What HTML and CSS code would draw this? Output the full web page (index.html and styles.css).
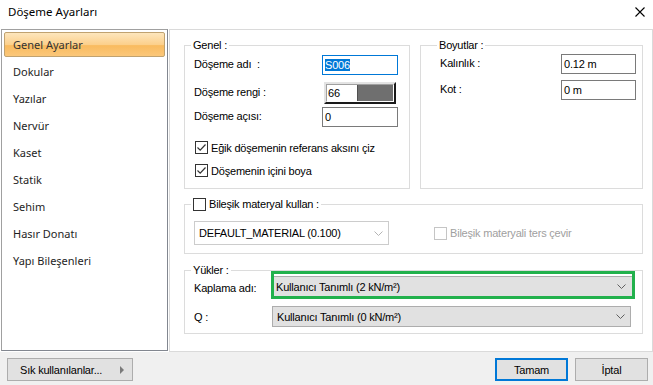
FILE: index.html
```html
<!DOCTYPE html>
<html lang="tr">
<head>
  <meta charset="UTF-8">
  <title>Döşeme Ayarları</title>
  <link rel="stylesheet" href="styles.css">
</head>
<body>
  <div class="window">
    <div class="titlebar">
      <span class="title">Döşeme Ayarları</span>
      <svg class="close" width="10" height="10" viewBox="0 0 10 10"><path d="M0.5 0.5 L9.5 9.5 M9.5 0.5 L0.5 9.5" stroke="#000" stroke-width="1.1" fill="none"/></svg>
    </div>
    <div class="content">
      <ul class="nav">
        <li class="active">Genel Ayarlar</li>
        <li>Dokular</li>
        <li>Yazılar</li>
        <li>Nervür</li>
        <li>Kaset</li>
        <li>Statik</li>
        <li>Sehim</li>
        <li>Hasır Donatı</li>
        <li>Yapı Bileşenleri</li>
      </ul>
      <div class="panel">
        <div class="top-row">
          <fieldset class="group genel">
            <legend>Genel :</legend>
            <div class="form-row r1">
              <label>Döşeme adı&nbsp; :</label>
              <div class="textbox focused"><span class="sel">S006</span></div>
            </div>
            <div class="form-row r2">
              <label>Döşeme rengi :</label>
              <div class="color-ctl">
                <div class="color-inner">
                  <span class="color-num">66</span>
                  <span class="swatch"></span>
                </div>
              </div>
            </div>
            <div class="form-row r3">
              <label>Döşeme açısı:</label>
              <div class="textbox">0</div>
            </div>
            <div class="check c1"><span class="box checked"><svg width="11" height="11" viewBox="0 0 11 11"><path d="M1.5 5.5 L4.2 8.2 L9.5 2.5" stroke="#333" stroke-width="1.2" fill="none"/></svg></span>Eğik döşemenin referans aksını çiz</div>
            <div class="check c2"><span class="box checked"><svg width="11" height="11" viewBox="0 0 11 11"><path d="M1.5 5.5 L4.2 8.2 L9.5 2.5" stroke="#333" stroke-width="1.2" fill="none"/></svg></span>Döşemenin içini boya</div>
          </fieldset>
          <fieldset class="group boyutlar">
            <legend>Boyutlar :</legend>
            <div class="form-row b1">
              <label>Kalınlık :</label>
              <div class="textbox dim">0.12 m</div>
            </div>
            <div class="form-row b2">
              <label>Kot :</label>
              <div class="textbox dim">0 m</div>
            </div>
          </fieldset>
        </div>
        <fieldset class="group bilesik">
          <legend><span class="check"><span class="box"></span>Bileşik materyal kullan :</span></legend>
          <div class="bilesik-row">
            <div class="combo white">
              <span>DEFAULT_MATERIAL (0.100)</span>
              <svg width="9" height="5" viewBox="0 0 9 5"><path d="M0.5 0.5 L4.5 4.5 L8.5 0.5" stroke="#b4b4b4" fill="none"/></svg>
            </div>
            <div class="check disabled"><span class="box"></span>Bileşik materyali ters çevir</div>
          </div>
        </fieldset>
        <fieldset class="group yukler">
          <legend>Yükler :</legend>
          <div class="load-row first">
            <label>Kaplama adı:</label>
            <div class="highlight">
              <div class="combo gray">
                <span>Kullanıcı Tanımlı (2 kN/m²)</span>
                <svg width="9" height="5" viewBox="0 0 9 5"><path d="M0.5 0.5 L4.5 4.5 L8.5 0.5" stroke="#606060" fill="none"/></svg>
              </div>
            </div>
          </div>
          <div class="load-row second">
            <label>Q :</label>
            <div class="combo gray">
              <span>Kullanıcı Tanımlı (0 kN/m²)</span>
              <svg width="9" height="5" viewBox="0 0 9 5"><path d="M0.5 0.5 L4.5 4.5 L8.5 0.5" stroke="#606060" fill="none"/></svg>
            </div>
          </div>
        </fieldset>
      </div>
    </div>
    <div class="footer">
      <button class="btn fav">Sık kullanılanlar...<span class="arrow"></span></button>
      <div class="actions">
        <button class="btn primary">Tamam</button>
        <button class="btn">İptal</button>
      </div>
    </div>
  </div>
</body>
</html>
```

FILE: styles.css
```css
body {
  margin: 0;
  font-family: "Liberation Sans", Arial, sans-serif;
  font-size: 11px;
  letter-spacing: -0.2px;
  color: #000;
  background: #fff;
}
.window {
  width: 653px;
  height: 385px;
  display: flex;
  flex-direction: column;
  background: #fff;
  overflow: hidden;
}
.titlebar {
  height: 29px;
  box-sizing: border-box;
  display: flex;
  justify-content: space-between;
  align-items: flex-start;
  padding: 4px 8px 0 8px;
}
.title {
  font-family: "Noto Sans", sans-serif;
  font-size: 11.5px;
  letter-spacing: 0;
  line-height: 16px;
  color: #000;
}
.close {
  margin-top: 3px;
}
.content {
  display: flex;
  gap: 1px;
  height: 323px;
  padding-left: 1px;
}
.nav {
  list-style: none;
  margin: 0;
  padding: 2px 2px 0 2px;
  width: 167px;
  height: 322px;
  box-sizing: border-box;
  border: 1px solid #a0a0a0;
  border-right-color: #828790;
  border-bottom-color: #828790;
  font-family: "Noto Sans", sans-serif;
  font-size: 11px;
  letter-spacing: 0;
  color: #1e1e1e;
}
.nav li {
  height: 25px;
  box-sizing: border-box;
  line-height: 23px;
  margin-bottom: 2px;
  padding-left: 8px;
  border: 1px solid transparent;
  border-radius: 2px;
}
.nav li.active {
  border-color: #c0a270;
  background: linear-gradient(#fde6bd, #fcd08c 50%, #f9bb5f 55%, #fbc77a);
  color: #333;
}
.panel {
  flex: 1;
  box-sizing: border-box;
  border: 1px solid #dadada;
  padding: 9px 9px 0 14px;
}
.top-row {
  display: flex;
  gap: 10px;
  height: 150px;
}
.group {
  margin: 0;
  padding: 0 0 0 9px;
  min-width: 0;
  border: 1px solid #dcdcdc;
  box-sizing: border-box;
}
.group legend {
  margin-left: -3px;
  padding: 0 2px;
  line-height: 13px;
  height: 13px;
}
.genel {
  width: 226px;
  padding-right: 11px;
}
.boyutlar {
  flex: 1;
  padding-left: 19px;
  padding-right: 6px;
}
.form-row {
  display: flex;
  align-items: center;
  justify-content: space-between;
  height: 20px;
}
.form-row label {
  margin-top: -3px;
}
.r1 { margin-top: 3px; }
.r2 { margin-top: 7px; height: 22px; }
.r3 { margin-top: 3px; }
.b1 { margin-top: 2px; }
.b2 { margin-top: 6px; }
.textbox {
  width: 76px;
  height: 20px;
  box-sizing: border-box;
  border: 1px solid #7a7a7a;
  padding-left: 2px;
  line-height: 18px;
}
.textbox.dim {
  width: 75px;
}
.textbox.focused {
  border-color: #0078d7;
}
.sel {
  background: #0078d7;
  color: #fff;
}
.color-ctl {
  width: 72px;
  height: 22px;
  box-sizing: border-box;
  margin-right: 2px;
  border: 2px solid;
  border-color: #e3e3e3 #1a1a1a #1a1a1a #e3e3e3;
}
.color-inner {
  display: flex;
  height: 100%;
  border: 1px solid #a0a0a0;
  border-right-color: #fff;
  border-bottom-color: #fff;
  box-sizing: border-box;
}
.color-num {
  flex: 1;
  line-height: 16px;
  padding-left: 1px;
}
.swatch {
  width: 35px;
  background: #6f6f6f;
  border-left: 1px solid #505050;
}
.check {
  display: flex;
  align-items: center;
  height: 13px;
}
.c1 { margin-top: 14px; padding-left: 1px; }
.c2 { margin-top: 10px; padding-left: 1px; }
.box {
  width: 13px;
  height: 13px;
  box-sizing: border-box;
  border: 1px solid #333;
  background: #fff;
  margin-right: 3px;
  display: flex;
  align-items: center;
  justify-content: center;
}
.bilesik {
  margin-top: 9px;
  height: 56px;
  padding-right: 11px;
}
.bilesik legend .check {
  height: 13px;
}
.bilesik-row {
  display: flex;
  align-items: center;
  margin-top: 10px;
}
.combo {
  display: flex;
  align-items: center;
  justify-content: space-between;
  box-sizing: border-box;
  padding: 0 5px 0 4px;
}
.combo.white {
  width: 195px;
  height: 24px;
  border: 1px solid #cccccc;
  color: #000;
}
.disabled {
  margin-left: 45px;
  color: #a0a0a0;
}
.disabled .box {
  border-color: #c5c5c5;
}
.yukler {
  margin-top: 10px;
  height: 70px;
  padding-right: 11px;
}
.load-row {
  display: flex;
  align-items: center;
}
.load-row label {
  width: 78px;
  flex-shrink: 0;
}
.load-row.first {
  margin-top: -6px;
}
.load-row.first label {
  margin-top: 6px;
}
.load-row.second {
  margin-top: 7px;
}
.load-row.second label {
  margin-top: 1px;
}
.highlight {
  flex: 1;
  height: 28px;
  box-sizing: border-box;
  margin: 0 -4px 0 -1px;
  border: 3px solid #22b14c;
  padding: 2px 0 0 0;
  background: #fff;
}
.highlight .combo {
  height: 21px;
  border-top: 1px solid #adadad;
  padding-left: 2px;
  padding-right: 6px;
}
.combo.gray {
  flex: 1;
  height: 21px;
  background: #e1e1e1;
  border: 1px solid #adadad;
}
.highlight .combo.gray {
  border: none;
  border-top: 1px solid #adadad;
  height: 100%;
}
.footer {
  flex: 1;
  background: #f0f0f0;
  display: flex;
  justify-content: space-between;
  align-items: flex-start;
  padding: 6px 5px 0 7px;
}
.btn {
  font-family: "Liberation Sans", Arial, sans-serif;
  font-size: 11px;
  letter-spacing: -0.2px;
  color: #000;
  height: 23px;
  width: 73px;
  background: #e1e1e1;
  border: 1px solid #adadad;
  padding: 0;
}
.btn.primary {
  border: 2px solid #0078d7;
}
.fav {
  width: 126px;
  display: flex;
  align-items: center;
  justify-content: space-between;
  padding: 0 8px 0 12px;
}
.arrow {
  width: 0;
  height: 0;
  border-top: 4px solid transparent;
  border-bottom: 4px solid transparent;
  border-left: 4px solid #7a7a7a;
}
.actions {
  display: flex;
  gap: 7px;
}
```
